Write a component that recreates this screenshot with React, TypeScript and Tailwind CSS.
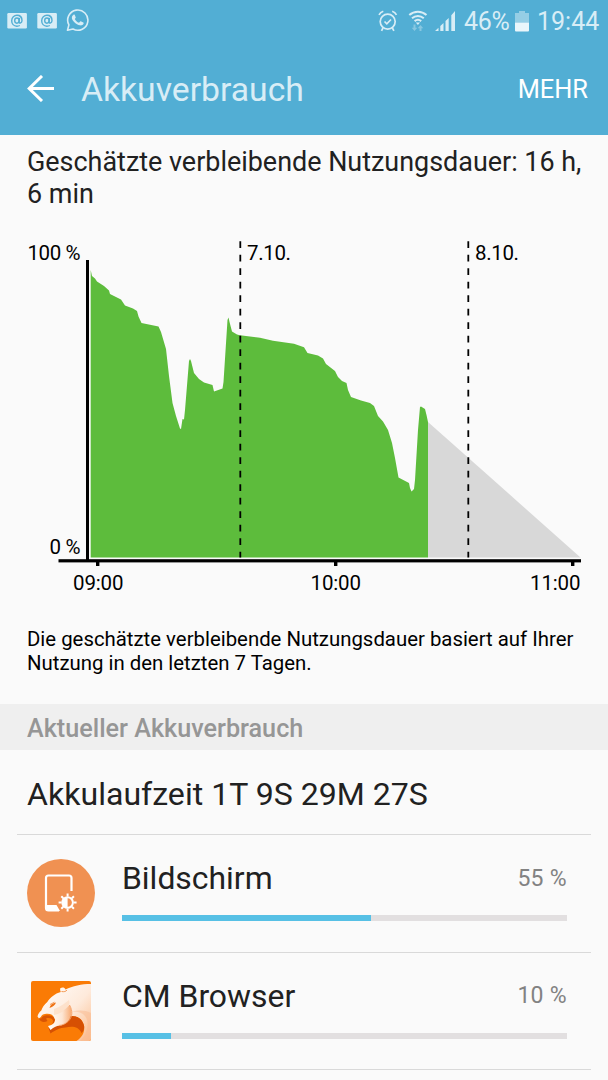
import type { ReactNode } from 'react'

interface UsageItem {
  name: string
  percent: number
  barWidth: number
  icon: ReactNode
}

interface ChartLabel {
  text: string
  x: number
  y: number
  width: number
}

// [x, y] outline of the battery level history
const HISTORY: [number, number][] = [
  [90.7, 40], [92, 46], [95, 48.5], [97, 51.5], [104, 56], [109, 60.5], [110, 64], [121, 69.5],
  [125, 75.5], [133, 78.5], [137, 81], [138.5, 86.5], [141.5, 93], [158.5, 96.5], [161, 102],
  [166, 119], [169, 146], [172.5, 173], [176, 186], [180, 198.5], [181, 199], [182.5, 189],
  [184, 189.5], [185, 180], [189, 131], [190, 129], [191, 131], [194, 143], [199, 149],
  [204, 152.5], [212.5, 155], [214, 161.5], [222.5, 158.5], [223.5, 152], [227.5, 90],
  [228.5, 87.5], [229.5, 92], [232, 101.5], [237, 104.5], [240, 105.2], [260, 107.8],
  [273, 110.8], [294, 113.8], [304, 117.3], [307.5, 123], [318, 125.5], [323, 128.5],
  [326, 134], [335, 141], [338, 147], [342, 151], [346.5, 153], [348, 160], [351, 167],
  [361, 170.5], [370, 173], [374, 176], [378, 186], [383, 191.5], [388, 200], [392, 213],
  [395, 228], [398.5, 247.5], [409, 253], [410, 258], [411.5, 261.5], [414, 259], [415, 250],
  [418, 200], [420, 177], [421, 176.5], [425, 179], [426.5, 185], [428, 192],
]

const LABELS: ChartLabel[] = [
  { text: '100 %', x: 27.5, y: 30, width: 53 },
  { text: '0 %', x: 49.5, y: 324, width: 31 },
  { text: '7.10.', x: 247, y: 30, width: 44 },
  { text: '8.10.', x: 475, y: 30, width: 44 },
  { text: '09:00', x: 73, y: 359.5, width: 50.5 },
  { text: '10:00', x: 310.5, y: 359.5, width: 50.5 },
  { text: '11:00', x: 530, y: 359.5, width: 50.5 },
]

const DAY_MARKERS = [240.3, 468.3]
const HOUR_TICKS = [97.7, 335.7, 572.7]

function StatusBar() {
  return (
    <div className="flex h-[42px] items-center justify-between pr-[9px] pl-[7px] text-[#d8edf6]">
      <div className="flex items-center pb-px">
        <MailIcon />
        <MailIcon />
        <WhatsAppIcon />
      </div>
      <div className="flex items-center">
        <AlarmIcon />
        <WifiIcon />
        <SignalIcon />
        <span className="ml-[7px] w-[46px] pt-px text-[25px] tracking-[-0.3px] whitespace-nowrap">46%</span>
        <BatteryIcon />
        <span className="ml-[8px] w-[62px] pt-px text-[25px] whitespace-nowrap">19:44</span>
      </div>
    </div>
  )
}

function MailIcon() {
  return (
    <svg className="mr-[10px]" width="20" height="16" viewBox="0 0 20 16">
      <rect x="0.300" width="19.600" height="15.5" rx="1.2" fill="currentColor" />
      <g fill="none" stroke="#52aed4" strokeWidth="1.4">
        <ellipse cx="9.9" cy="7.6" rx="2.2" ry="2.6" />
        <path d="M12.4 4.9l-.3 4.4c.2 1.4 2.8.9 2.9-1.8 0-3.3-2.2-5.2-5-5.2S4.700 4.600 4.700 7.700s2 5.500 5.200 5.500c1.100 0 2-.2 2.900-.7" />
      </g>
    </svg>
  )
}

function WhatsAppIcon() {
  return (
    <svg className="-ml-px" width="23" height="23" viewBox="0 0 23 23">
      <path
        d="M1.500 21.300l1.400-5.400A10.100 10.100 0 1 1 7 20z"
        fill="none"
        stroke="currentColor"
        strokeWidth="1.6"
        strokeLinejoin="round"
      />
      <path
        d="M7.300 5.900c.5-.4 1.200-.4 1.500.2l.9 2.100c.2.600-.3 1-.9 1.700.9 1.900 2.200 3.100 4.200 3.900l1.200-1.300c.3-.4.7-.3 1-.1l2.100 1c.5.300.4.800.2 1.300-.6 1.500-2.200 1.900-3.600 1.600-4-.9-7.300-4-8-7.100-.2-1.500.5-2.700 1.400-3.300z"
        fill="currentColor"
      />
    </svg>
  )
}

function AlarmIcon() {
  return (
    <svg width="20" height="22" viewBox="0 0 20 22" fill="none" stroke="currentColor" strokeWidth="1.7">
      <circle cx="9.700" cy="11.600" r="7.500" />
      <path d="M6.500 11.500l2.300 2.300 4.200-4.300M1 4.900C2 3 3.400 1.900 5.300 1.300M18.500 4.900c-1-1.900-2.400-3-4.300-3.600M5 18l-1.500 2.800M14.400 18l1.500 2.800" />
    </svg>
  )
}

function WifiIcon() {
  return (
    <svg className="ml-[10px]" width="20" height="22" viewBox="0 0 20 22" fill="none">
      <g stroke="currentColor" strokeWidth="2">
        <path d="M1.300 5.100c4.900-4.500 12.300-4.500 17.200 0M4 8.300c3.400-3 8.400-3 11.800 0M6.600 11.100c2-1.600 4.600-1.600 6.600 0" />
      </g>
      <path d="M7.800 12.500h4.200l-2.100 2.400z" fill="currentColor" />
      <g opacity=".4">
        <path d="M6.500 14.500v4M12.500 21v-4" stroke="currentColor" strokeWidth="2" />
        <path d="M3.700 17.700h5.600L6.500 21zM9.700 18.200h5.600L12.500 15z" fill="currentColor" />
      </g>
    </svg>
  )
}

function SignalIcon() {
  return (
    <svg className="ml-[7px]" width="22" height="22" viewBox="0 0 22 22" fill="currentColor">
      <path d="M0 21l3.500-3.300V21zM5.300 15.900l3.200-3V21H5.300zM10.500 11l3.200-3v13h-3.200zM16.300 5.200L20 1v20h-3.700z" />
    </svg>
  )
}

function BatteryIcon() {
  return (
    <svg className="ml-[5px]" width="14" height="21" viewBox="0 0 14 21" fill="currentColor">
      <path d="M4 0h6v2h4v9.500H0V2h4z" opacity=".5" />
      <path d="M0 11.500h14v8a1 1 0 0 1-1 1H1a1 1 0 0 1-1-1z" fill="#eaf6fb" />
    </svg>
  )
}

function Toolbar() {
  return (
    <div className="flex h-[93px] items-center pr-[20px] pb-px pl-[27px]">
      <svg width="27" height="27" viewBox="0 0 27 27" fill="none" stroke="#fff" strokeWidth="3">
        <path d="M15 1L2.200 13.500 15 26M2 13.500h25" />
      </svg>
      <h1 className="ml-[27px] pt-[3px] text-[33.7px] leading-[42px] text-[#d8edf6]">Akkuverbrauch</h1>
      <span className="ml-auto pt-[2px] text-[25.4px] text-white">MEHR</span>
    </div>
  )
}

function BatteryChart() {
  const outline = HISTORY.map(([x, y]) => `${x},${y}`).join(' ')

  return (
    <svg className="block" width="608" height="375" viewBox="0 0 608 375">
      <polygon points={`90.7,327.5 ${outline} 428,327.5`} fill="#5dbc3c" />
      <polygon points="428,192 580.500,327.500 428,327.500" fill="#d8d8d8" />

      {/* Axes */}
      <rect x="86" y="30" width="3" height="301" />
      <rect x="58.500" y="329.200" width="522.500" height="3.200" />
      {HOUR_TICKS.map(x => (
        <rect key={x} x={x - 1.7} y="332" width="3.4" height="4" />
      ))}

      {/* Day boundaries */}
      {DAY_MARKERS.map(x => (
        <line
          key={x}
          x1={x}
          x2={x}
          y1="11.2"
          y2="327.5"
          stroke="#000"
          strokeWidth="1.8"
          strokeDasharray="6.8 6.7"
        />
      ))}

      {LABELS.map(label => (
        <text key={label.text} x={label.x} y={label.y} textLength={label.width} fontSize="20.5">
          {label.text}
        </text>
      ))}
    </svg>
  )
}

function DisplayIcon() {
  return (
    <svg width="68" height="68" viewBox="0 0 68 68">
      <circle cx="34" cy="34" r="34" fill="#f09152" />
      <path
        d="M32 51.500H21.500q-2.500 0-2.500-2.500V19q0-2.500 2.500-2.500H42q2.500 0 2.500 2.500v13"
        fill="none"
        stroke="#fff"
        strokeWidth="2.200"
      />
      <path d="M19 46h10.500l3.500 6H21q-2 0-2-2z" fill="#fff" />
      <g fill="none" stroke="#fff" strokeWidth="2">
        <path d="M40.600 34.500v3M40.600 49.500v3M31.600 43.500h3M46.600 43.500h3M34.300 37.200l2 2M44.900 47.800l2 2M34.300 49.800l2-2M44.900 39.200l2-2" />
        <circle cx="40.600" cy="43.500" r="5.300" />
      </g>
      <path d="M40.600 38.200v10.600a5.300 5.300 0 0 1 0-10.600z" fill="#fff" />
    </svg>
  )
}

function BrowserIcon() {
  return (
    <svg className="mt-[4px]" width="60" height="60" viewBox="0 0 60 60">
      <defs>
        <linearGradient id="fur" x1="0" y1="0" x2="1" y2="1">
          <stop offset="0" stopColor="#fff" />
          <stop offset=".55" stopColor="#feeadb" />
          <stop offset="1" stopColor="#fbb988" />
        </linearGradient>
        <linearGradient id="cheek" x1="0" y1="0" x2="1" y2="0">
          <stop offset="0" stopColor="#fff" />
          <stop offset=".6" stopColor="#fde6d4" />
          <stop offset="1" stopColor="#f8ab74" />
        </linearGradient>
        <clipPath id="tile">
          <rect width="60" height="60" rx="2" />
        </clipPath>
      </defs>
      <g clipPath="url(#tile)">
        <rect width="60" height="60" fill="#fa7b05" />
        <path
          d="M6.500 35.500c.5-2.500 1.800-4.500 3.800-6 1-3 3-6 6-8.500 3-4.500 7.500-8.500 13.500-10-.8-1.500-.9-3-.3-4 2-.8 4-.8 5 1.500 7-3.500 16-5.500 25.500-5.500v57H45.500c6-4 8.500-9 7.500-15.500-1.500-6.500-7-10-13-9.500-7 .5-12 3-16.500 3-.5-4-4.500-6-9.500-5-1.800.3-3.300 1-4.200 3l-1.800 1.500z"
          fill="url(#fur)"
        />
        <path d="M40.500 31c8-1 15 2 16 10 1 8-3 14-7 19h8l2.500-9V32c-7-3-12-3-19.500-1z" fill="#f9b98f" opacity=".5" />
        {/* shadows inside the mouth and below the jaw */}
        <path d="M8 37.500c1 3.500 5 4.500 8.500 2.500l-1.500-2.500c3-1 5.500-.5 7 2l-.5 4.500 2.500-4.500c-.5-4-4.500-6-9.500-5-1.800.3-3.300 1-4.200 3z" fill="#d95503" />
        <path d="M17.500 47l2 5.500c6-4 9-5.500 15-6 7-1.500 13-1 16 5.500 2.500-2 3-5 2.500-7.500-1.500-6.500-7-10-13-9.500l-10 6z" fill="#d65003" />
        <path
          d="M23 42c2-3 1-6-1-8 5-1 11-4 16.500-10 2 4 2.500 7.500 1.500 10.500-1.500 6-6 9.500-11 10-4 .5-6.500 2-9.500 4.500L17 45c2.500-.5 4.500-1.500 6-3z"
          fill="url(#cheek)"
        />
        <path
          d="M38.500 24c3.500 6 3 12-1 16-3 3-6 4-9.500 4.500"
          fill="none"
          stroke="#f5a066"
          strokeWidth=".9"
        />
        <path d="M23 28c6-2 11-6 15-9 1 3 0 5-1 7-4 4-9 7-14 8z" fill="#fbd8bd" opacity=".6" />
        {/* eye and ear */}
        <path d="M18.500 27c.5-3 3-5 6.500-5.500-.8 2.500-3 4.500-6.500 5.500z" fill="#ef7213" />
        <path d="M19 23.500l4.500-2.300M30.500 10.500c2.500.5 4.500 0 5.500-1.500" fill="none" stroke="#f49a55" />
      </g>
    </svg>
  )
}

function UsageRow({ item }: { item: UsageItem }) {
  return (
    <div className="mx-[17px] flex h-[117.7px] border-t border-[#d9d9d9]">
      <div className="flex w-[88px] justify-center pt-[24px]">{item.icon}</div>
      <div className="mr-[24px] flex-1">
        <div className="flex h-[80px] items-center justify-between pb-px pl-[17px] pt-[7px]">
          <span className="pt-[2px] text-[31.9px] text-[#212121]">{item.name}</span>
          <span className="pt-[2px] text-[23px] tracking-[0.3px] text-[#828282]">{item.percent} %</span>
        </div>
        <div className="ml-[17px] h-[6px] bg-[#e2dfe0]">
          <div className="h-full bg-[#57c0e5]" style={{ width: `${item.barWidth}%` }} />
        </div>
      </div>
    </div>
  )
}

const USAGE: UsageItem[] = [
  { name: 'Bildschirm', percent: 55, barWidth: 56, icon: <DisplayIcon /> },
  { name: 'CM Browser', percent: 10, barWidth: 11.1, icon: <BrowserIcon /> },
]

export default function App() {
  return (
    <div className="h-[1080px] w-[608px] overflow-hidden bg-[#fafafa] font-['Roboto',sans-serif] text-black">
      <header className="h-[135px] bg-[#52aed4]">
        <StatusBar />
        <Toolbar />
      </header>

      <p className="h-[95px] pt-[11px] pl-[27px] text-[26.93px] leading-[32px] whitespace-nowrap text-[#212121]">
        Geschätzte verbleibende Nutzungsdauer: 16 h,
        <br />
        6 min
      </p>

      <BatteryChart />

      <p className="h-[99px] pt-[22px] pl-[27px] text-[20.36px] leading-[24px] whitespace-nowrap">
        Die geschätzte verbleibende Nutzungsdauer basiert auf Ihrer
        <br />
        Nutzung in den letzten 7 Tagen.
      </p>

      <h2 className="flex h-[46px] items-center bg-[#efefef] pt-[3px] pl-[27px] text-[25.2px] font-medium text-[#969696]">
        Aktueller Akkuverbrauch
      </h2>

      <div className="flex h-[84px] items-center pt-[5px] pl-[27px] text-[32.1px] whitespace-nowrap text-[#212121]">
        Akkulaufzeit 1T 9S 29M 27S
      </div>

      {USAGE.map(item => (
        <UsageRow key={item.name} item={item} />
      ))}
      <div className="mx-[17px] border-t border-[#d9d9d9]" />
    </div>
  )
}
